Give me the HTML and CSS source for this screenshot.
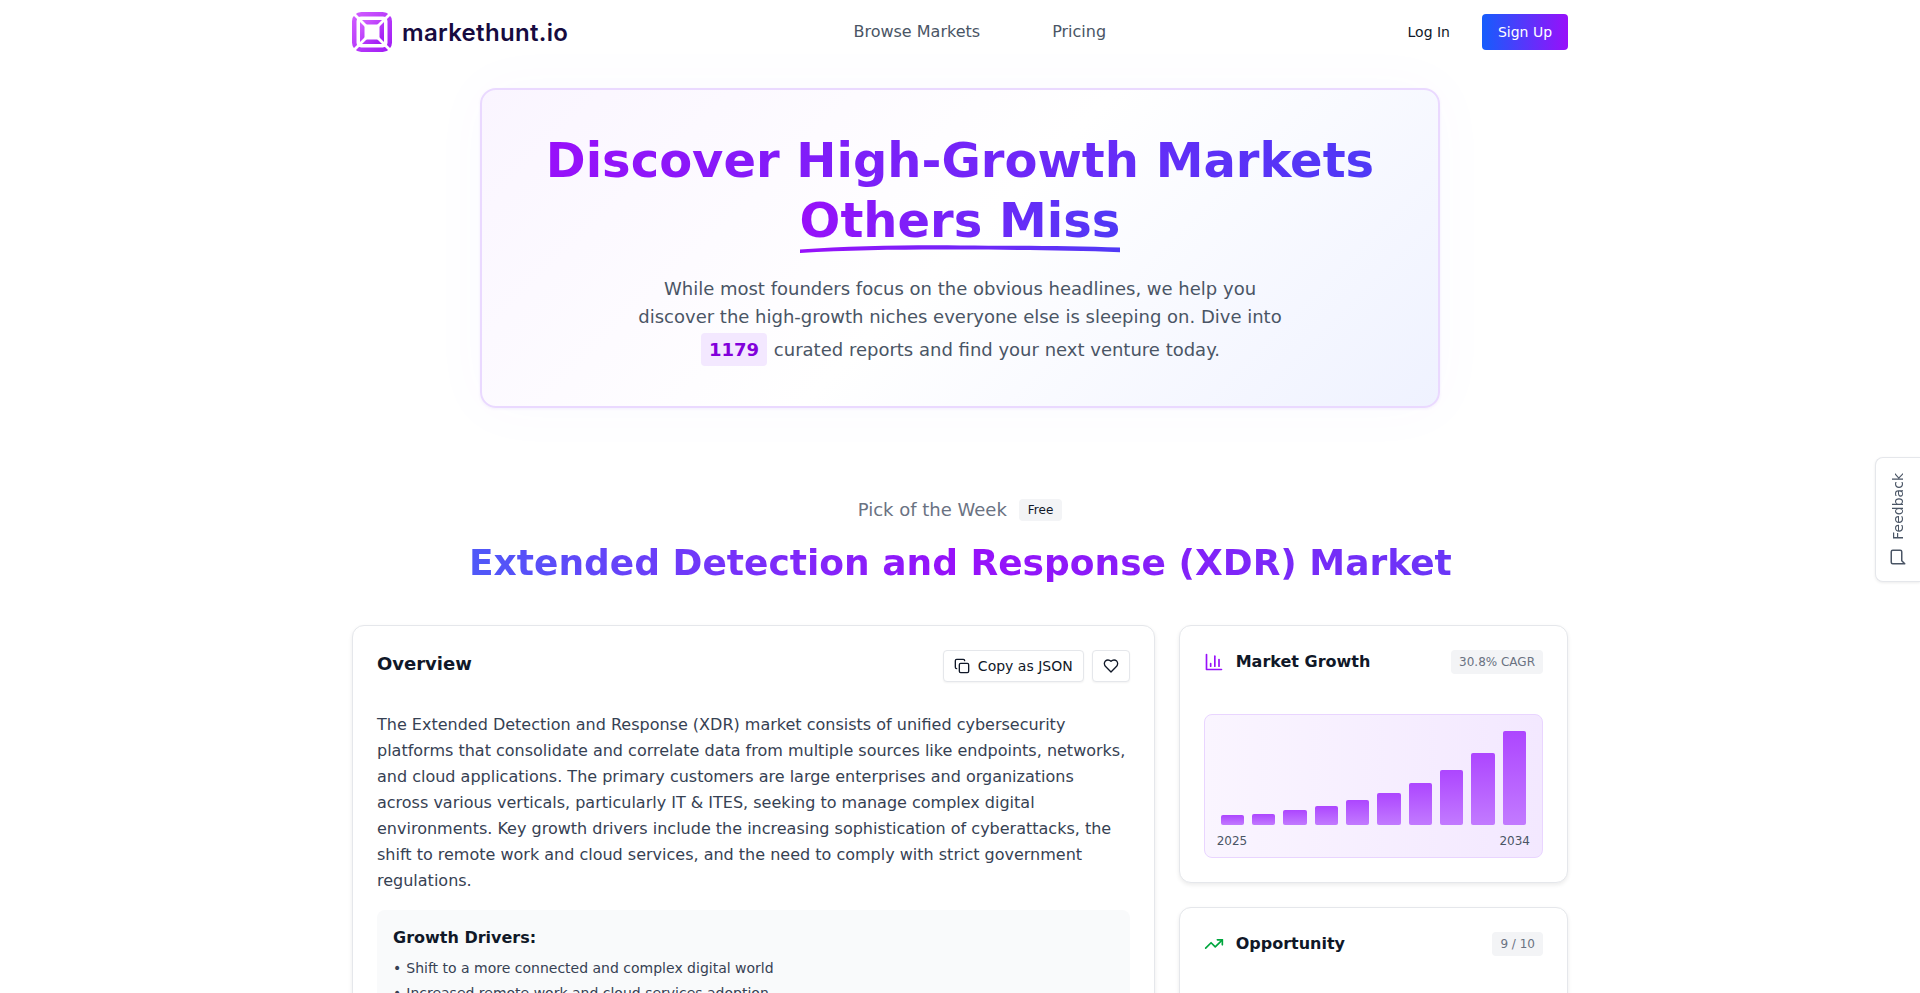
FILE: index.html
```html
<!DOCTYPE html>
<html lang="en">
<head>
<meta charset="utf-8">
<title>markethunt.io</title>
<link rel="stylesheet" href="styles.css">
</head>
<body>
<div class="page">
  <header class="nav">
    <a class="logo">
      <svg class="logo-icon" viewBox="0 0 40 40">
        <defs>
          <linearGradient id="lg" x1="0" y1="0" x2="1" y2="1">
            <stop offset="0" stop-color="#d05cff"/>
            <stop offset="1" stop-color="#a11cf5"/>
          </linearGradient>
        </defs>
        <g fill="none" stroke="url(#lg)" stroke-width="4.500">
          <rect x="2.250" y="2.250" width="35.500" height="35.500" rx="7"/>
          <rect x="10.250" y="10.250" width="19.500" height="19.500"/>
        </g>
        <g stroke="#fff" stroke-width="2.800">
          <line x1="0" y1="0" x2="14" y2="14"/>
          <line x1="40" y1="0" x2="26" y2="14"/>
          <line x1="0" y1="40" x2="14" y2="26"/>
          <line x1="40" y1="40" x2="26" y2="26"/>
        </g>
      </svg>
      <span class="logo-text">markethunt.io</span>
    </a>
    <nav class="nav-links">
      <a>Browse Markets</a>
      <a>Pricing</a>
    </nav>
    <div class="nav-actions">
      <a class="login">Log In</a>
      <a class="signup">Sign Up</a>
    </div>
  </header>

  <section class="hero">
    <h1 class="hero-title">
      <span class="grad">Discover High-Growth Markets</span>
      <span class="grad others">Others Miss
        <svg class="underline" viewBox="0 0 320 8" preserveAspectRatio="none">
          <defs>
            <linearGradient id="ul" x1="0" y1="0" x2="1" y2="0">
              <stop offset="0" stop-color="#9810fa"/>
              <stop offset="1" stop-color="#4f39f6"/>
            </linearGradient>
          </defs>
          <path d="M0 4.600C50 .6 110 0 160 .4C210 .8 270 .4 320 2.600V7.200C270 5 210 4.800 160 4.600C110 4.400 50 4.800 0 8Z" fill="url(#ul)"/>
        </svg>
      </span>
    </h1>
    <p class="hero-sub">While most founders focus on the obvious headlines, we help you discover the high-growth niches everyone else is sleeping on. Dive into <strong class="count">1179</strong> curated reports and find your next venture today.</p>
  </section>

  <section class="pick">
    <div class="pick-label">
      <span>Pick of the Week</span>
      <span class="free">Free</span>
    </div>
    <h2 class="pick-title">Extended Detection and Response (XDR) Market</h2>
  </section>

  <section class="grid">
    <article class="card main-card">
      <div class="main-head">
        <h3 class="overview">Overview</h3>
        <div class="tools">
          <button class="tool">
            <svg class="ic" viewBox="0 0 24 24"><rect x="8" y="8" width="14" height="14" rx="2"/><path d="M4 16c-1.1 0-2-.9-2-2V4c0-1.1.9-2 2-2h10c1.1 0 2 .9 2 2"/></svg>
            Copy as JSON
          </button>
          <button class="tool heart">
            <svg class="ic" viewBox="0 0 24 24"><path d="M19 14c1.49-1.46 3-3.21 3-5.5A5.5 5.5 0 0 0 16.500 3c-1.760 0-3 .5-4.500 2-1.500-1.500-2.740-2-4.500-2A5.500 5.500 0 0 0 2 8.500c0 2.300 1.500 4.050 3 5.500l7 7Z"/></svg>
          </button>
        </div>
      </div>
      <p class="desc">The Extended Detection and Response (XDR) market consists of unified cybersecurity platforms that consolidate and correlate data from multiple sources like endpoints, networks, and cloud applications. The primary customers are large enterprises and organizations across various verticals, particularly IT &amp; ITES, seeking to manage complex digital environments. Key growth drivers include the increasing sophistication of cyberattacks, the shift to remote work and cloud services, and the need to comply with strict government regulations.</p>
      <div class="drivers">
        <h4>Growth Drivers:</h4>
        <ul>
          <li>Shift to a more connected and complex digital world</li>
          <li>Increased remote work and cloud services adoption</li>
        </ul>
      </div>
    </article>

    <aside class="side">
      <article class="card side-card">
        <div class="side-head">
          <svg class="side-ic purple" viewBox="0 0 24 24"><path d="M3 3v18h18"/><path d="M18 17V9"/><path d="M13 17V5"/><path d="M8 17v-3"/></svg>
          <h3>Market Growth</h3>
          <span class="tag">30.8% CAGR</span>
        </div>
        <div class="chart">
          <div class="bars">
            <div class="bar" style="height:10px"></div>
            <div class="bar" style="height:11px"></div>
            <div class="bar" style="height:15px"></div>
            <div class="bar" style="height:19px"></div>
            <div class="bar" style="height:25px"></div>
            <div class="bar" style="height:32px"></div>
            <div class="bar" style="height:42px"></div>
            <div class="bar" style="height:55px"></div>
            <div class="bar" style="height:72px"></div>
            <div class="bar" style="height:94px"></div>
          </div>
          <div class="years"><span>2025</span><span>2034</span></div>
        </div>
      </article>
      <article class="card side-card opp-card">
        <div class="side-head">
          <svg class="side-ic green" viewBox="0 0 24 24"><polyline points="22 7 13.5 15.500 8.500 10.500 2 17"/><polyline points="16 7 22 7 22 13"/></svg>
          <h3>Opportunity</h3>
          <span class="tag">9 / 10</span>
        </div>
      </article>
    </aside>
  </section>
</div>

<a class="feedback">
  <span>Feedback</span>
  <svg class="fb-ic" viewBox="0 0 24 24"><path d="M21 15a2 2 0 0 1-2 2H7l-4 4V5a2 2 0 0 1 2-2h14a2 2 0 0 1 2 2z"/></svg>
</a>
</body>
</html>
```

FILE: styles.css
```css
* { box-sizing: border-box; }
html, body { margin: 0; padding: 0; height: 993px; overflow: hidden; background: #fff; }
body { font-family: "DejaVu Sans", sans-serif; color: #101828; }
h1, h2, h3, h4, p, ul { margin: 0; padding: 0; }

.page { width: 1216px; margin: 0 auto; }

.nav { height: 64px; display: flex; align-items: center; justify-content: space-between; }
.logo { display: flex; align-items: center; gap: 10px; width: 216px; }
.logo-icon { width: 40px; height: 40px; flex: none; }
.logo-text { font-family: Inter, sans-serif; font-weight: 600; font-size: 24px; color: #170b3f; letter-spacing: .3px; white-space: nowrap; }
.nav-links { display: flex; gap: 72px; font-size: 16px; color: #4a5565; margin-top: -1px; }
.nav-actions { display: flex; align-items: center; gap: 16px; font-size: 14px; }
.login { padding: 0 16px; color: #101828; line-height: 36px; }
.signup { width: 86px; height: 36px; line-height: 36px; text-align: center; color: #fff; border-radius: 4px; background: linear-gradient(to right, #155dfc, #9810fa); }

.hero { position: relative; width: 960px; height: 320px; margin: 24px auto 0; padding: 40px 32px; border: 2px solid #ead9ff; border-radius: 16px; background: linear-gradient(135deg, #faf5ff, #ffffff 50%, #eff2ff); box-shadow: 0 1px 3px rgba(120, 60, 220, .08), 0 0 60px rgba(120, 90, 240, .03); text-align: center; }
.hero-title { display: flex; flex-direction: column; align-items: center; font-size: 48px; line-height: 60px; font-weight: 700; }
.grad { background: linear-gradient(to right, #9810fa, #4f39f6); -webkit-background-clip: text; background-clip: text; color: transparent; }
.others { position: relative; display: block; white-space: nowrap; }
.underline { position: absolute; left: 0; bottom: -3px; width: 100%; height: 8px; }
.hero-sub { width: 672px; margin: 25px auto 0; font-size: 18px; line-height: 28px; color: #4a5565; }
.count { display: inline-block; padding: 2.5px 8px; margin: 2px 1px 0 1px; background: #f3e8ff; color: #8200db; border-radius: 4px; font-weight: 700; }

.pick { margin-top: 89px; text-align: center; }
.pick-label { display: flex; justify-content: center; align-items: center; gap: 12px; height: 24px; font-size: 18px; color: #6a7282; }
.free { font-size: 12px; line-height: 22px; padding: 0 9px; margin-top: 2px; background: #f3f4f6; color: #101828; border-radius: 4px; }
.pick-title { margin-top: 22px; font-size: 36px; line-height: 40px; font-weight: 700; background: linear-gradient(to right, #4f59f8, #9810fa 50%, #6a36f7); -webkit-background-clip: text; background-clip: text; color: transparent; width: 982px; margin-left: auto; margin-right: auto; white-space: nowrap; }

.grid { display: grid; grid-template-columns: repeat(3, 1fr); gap: 24px; margin-top: 42px; }
.card { background: #fff; border: 1.5px solid #e5e7eb; border-radius: 12px; box-shadow: 0 2px 4px rgba(0, 0, 0, .08); }

.main-card { grid-column: span 2; padding: 24px; height: 800px; }
.main-head { display: flex; justify-content: space-between; align-items: flex-start; }
.overview { font-size: 18px; line-height: 28px; font-weight: 700; }
.tools { display: flex; gap: 8px; margin-top: 0; }
.tool { display: flex; align-items: center; gap: 8px; height: 32px; padding: 0 10px; font: 14px "DejaVu Sans", sans-serif; color: #101828; background: #fff; border: 1.5px solid #e5e7eb; border-radius: 4px; box-shadow: 0 1px 2px rgba(0, 0, 0, .05); }
.heart { width: 38px; justify-content: center; padding: 0; }
.ic { width: 16px; height: 16px; fill: none; stroke: #101828; stroke-width: 2; stroke-linecap: round; stroke-linejoin: round; }
.desc { margin-top: 30px; font-size: 16px; line-height: 26px; color: #364153; }
.drivers { margin-top: 16px; padding: 16px; background: #f9fafb; border-radius: 8px; height: 300px; }
.drivers h4 { font-size: 16px; line-height: 24px; font-weight: 700; color: #101828; }
.drivers ul { list-style: none; margin-top: 6px; font-size: 14px; line-height: 25px; color: #364153; }
.drivers li::before { content: "•"; margin-right: 5px; }

.side { display: flex; flex-direction: column; gap: 24px; }
.side-card { padding: 24px; height: 258px; }
.opp-card { height: 400px; }
.side-head { display: flex; align-items: center; height: 24px; margin-bottom: 40px; }
.side-head h3 { flex: 1; margin-left: 12px; font-size: 16px; line-height: 24px; font-weight: 700; }
.side-ic { width: 20px; height: 20px; fill: none; stroke-width: 2; stroke-linecap: round; stroke-linejoin: round; flex: none; }
.purple { stroke: #9810fa; }
.green { stroke: #00a63e; }
.tag { font-size: 12px; line-height: 24px; padding: 0 8px; background: #f3f4f6; color: #6a7282; border-radius: 4px; }

.chart { height: 144px; padding: 16px 12px 0; border: 1px solid #e9d5ff; border-radius: 8px; background: linear-gradient(to right, #faf5ff, #f3e8ff); }
.bars { display: flex; align-items: flex-end; gap: 8px; height: 94px; padding: 0 4px; }
.bar { flex: 1; border-radius: 2px; background: linear-gradient(to bottom, #ad46ff, #c27aff); }
.years { display: flex; justify-content: space-between; margin-top: 7px; font-size: 12px; line-height: 18px; color: #4a5565; }

.feedback { position: fixed; right: 0; top: 457px; width: 45px; height: 125px; display: flex; flex-direction: column; align-items: center; justify-content: center; gap: 8px; background: #fff; border: 1px solid #e5e7eb; border-right: 0; border-radius: 8px 0 0 8px; box-shadow: 0 1px 3px rgba(0, 0, 0, .08); font-size: 14px; color: #4a5565; }
.feedback span { writing-mode: vertical-rl; transform: rotate(180deg); }
.fb-ic { width: 18px; height: 18px; fill: none; stroke: #4a5565; stroke-width: 2; stroke-linecap: round; stroke-linejoin: round; transform: rotate(-90deg); }
```
